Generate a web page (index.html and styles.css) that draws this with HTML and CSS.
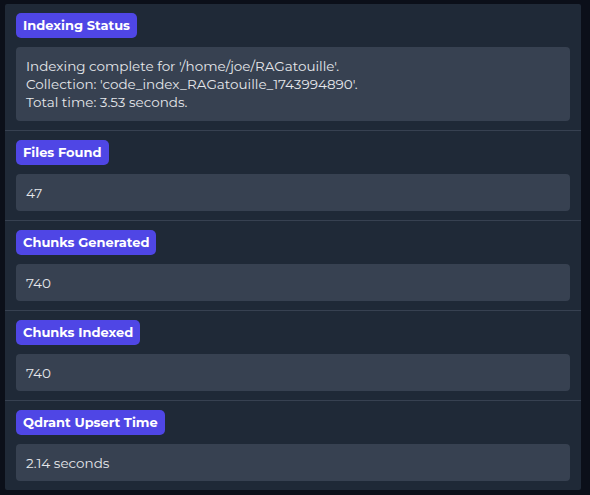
FILE: index.html
```html
<!DOCTYPE html>
<html>
<head>
<meta charset="utf-8">
<link rel="stylesheet" href="styles.css">
</head>
<body>
<div class="panel">
  <section class="block first">
    <span class="badge">Indexing Status</span>
    <div class="box multi">Indexing complete for '/home/joe/RAGatouille'.<br>Collection: 'code_index_RAGatouille_1743994890'.<br>Total time: 3.53 seconds.</div>
  </section>
  <section class="block">
    <span class="badge">Files Found</span>
    <div class="box">47</div>
  </section>
  <section class="block">
    <span class="badge">Chunks Generated</span>
    <div class="box">740</div>
  </section>
  <section class="block">
    <span class="badge">Chunks Indexed</span>
    <div class="box">740</div>
  </section>
  <section class="block">
    <span class="badge">Qdrant Upsert Time</span>
    <div class="box">2.14 seconds</div>
  </section>
</div>
</body>
</html>
```
FILE: styles.css
```css
html, body {
  margin: 0;
  padding: 0;
  background: #0b0f19;
}
body {
  padding: 4px 9px 5px 5px;
  font-family: Montserrat, "Open Sans", "Liberation Sans", sans-serif;
  color: #e5e7eb;
}
.panel {
  background: #1f2937;
  border-radius: 2px;
  display: flex;
  flex-direction: column;
}
.block {
  display: flex;
  flex-direction: column;
  align-items: flex-start;
  gap: 9px;
  padding: 9px 11px 9px 11px;
  border-top: 1px solid #374151;
}
.block.first {
  border-top: none;
}
.badge {
  background: #4f46e5;
  color: #ffffff;
  font-weight: 700;
  font-size: 13px;
  line-height: 25px;
  height: 25px;
  padding: 0 7px;
  border-radius: 5px;
}
.box {
  align-self: stretch;
  background: #374151;
  border-radius: 4px;
  font-size: 13.5px;
  line-height: 18px;
  padding: 9.5px 10px;
}
.box.multi {
  padding: 10px 10px;
}
```
